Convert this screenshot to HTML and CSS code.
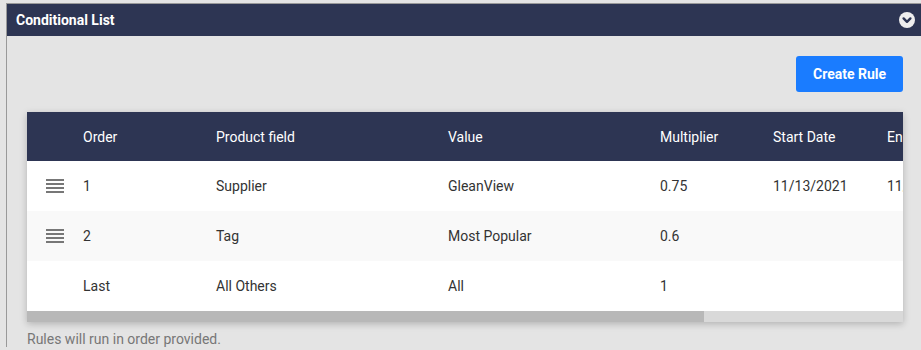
FILE: index.html
```html
<!DOCTYPE html>
<html lang="en">
<head>
  <meta charset="UTF-8">
  <meta name="viewport" content="width=device-width, initial-scale=1">
  <title>Conditional List</title>
  <link rel="stylesheet" href="styles.css">
</head>
<body>

<div class="panel">
  <div class="panel-header">
    <span class="panel-title">Conditional List</span>
    <svg class="toggle" width="16" height="16" viewBox="0 0 16 16">
      <circle cx="8" cy="8" r="8" fill="#eeeeee"/>
      <path d="M4.6 6.4 L8 9.8 L11.4 6.4" fill="none" stroke="#2d3553" stroke-width="2.4" stroke-linecap="round" stroke-linejoin="round"/>
    </svg>
  </div>

  <div class="panel-body">
    <div class="actions">
      <button class="btn-primary">Create Rule</button>
    </div>

    <div class="card">
      <div class="table-scroll">
        <table class="rules">
          <colgroup>
            <col style="width:56px">
            <col style="width:133px">
            <col style="width:232px">
            <col style="width:212px">
            <col style="width:113px">
            <col style="width:114px">
            <col style="width:114px">
            <col style="width:159px">
          </colgroup>
          <thead>
            <tr>
              <th></th>
              <th>Order</th>
              <th>Product field</th>
              <th>Value</th>
              <th>Multiplier</th>
              <th>Start Date</th>
              <th>End Date</th>
              <th></th>
            </tr>
          </thead>
          <tbody>
            <tr>
              <td><span class="drag"><i></i><i></i><i></i><i></i></span></td>
              <td>1</td>
              <td>Supplier</td>
              <td>GleanView</td>
              <td>0.75</td>
              <td>11/13/2021</td>
              <td>11/30/2021</td>
              <td></td>
            </tr>
            <tr>
              <td><span class="drag"><i></i><i></i><i></i><i></i></span></td>
              <td>2</td>
              <td>Tag</td>
              <td>Most Popular</td>
              <td>0.6</td>
              <td></td>
              <td></td>
              <td></td>
            </tr>
            <tr>
              <td></td>
              <td>Last</td>
              <td>All Others</td>
              <td>All</td>
              <td>1</td>
              <td></td>
              <td></td>
              <td></td>
            </tr>
          </tbody>
        </table>
      </div>
      <div class="scrollbar"><div class="scrollbar-thumb" style="width:77.3%"></div></div>
    </div>

    <p class="note">Rules will run in order provided.</p>
  </div>
</div>

</body>
</html>
```

FILE: styles.css
```css
body {
  margin: 0;
  font-family: Roboto, 'Liberation Sans', sans-serif;
  background-color: #e4e4e4;
  color: #333;
  font-size: 14px;
}
.panel {
  margin: 3px 0 0 6px;
  border-top: 1px solid #999;
  border-left: 1px solid #999;
}
.panel-header {
  height: 32px;
  background: #2d3553;
  padding: 0 6px 0 9px;
  display: flex;
  align-items: center;
  justify-content: space-between;
}
.panel-title {
  color: #fff;
  font-weight: 700;
  font-size: 14px;
}
.toggle {
  display: block;
}
.panel-body {
  padding: 20px 18px 0 20px;
}
.actions {
  display: flex;
  justify-content: flex-end;
  margin-bottom: 20px;
}
.btn-primary {
  width: 107px;
  height: 36px;
  background: #1a7cff;
  color: #fff;
  border: none;
  border-radius: 3px;
  font-family: inherit;
  font-size: 14px;
  font-weight: 700;
  cursor: pointer;
}
.card {
  background: #fff;
  box-shadow: 0 2px 7px rgba(0,0,0,0.22);
}
.table-scroll {
  overflow: hidden;
}
.scrollbar {
  height: 11px;
  background: #d9d9d9;
}
.scrollbar-thumb {
  height: 100%;
  background: #b8b8b8;
}
.rules {
  border-collapse: collapse;
  table-layout: fixed;
  width: 1133px;
}
.rules th {
  background: #2d3553;
  color: #fff;
  font-weight: 400;
  text-align: left;
  height: 49px;
  padding: 0;
  white-space: nowrap;
}
.rules td {
  height: 50px;
  padding: 0;
  white-space: nowrap;
}
.rules tbody tr:nth-child(2) {
  background: #f9f9f9;
}
.drag {
  display: flex;
  flex-direction: column;
  gap: 2px;
  width: 18px;
  margin-left: 19px;
}
.drag i {
  display: block;
  height: 2px;
  background: #777;
}
.note {
  margin: 9px 0 0;
  color: #777;
  font-size: 14px;
}
```
